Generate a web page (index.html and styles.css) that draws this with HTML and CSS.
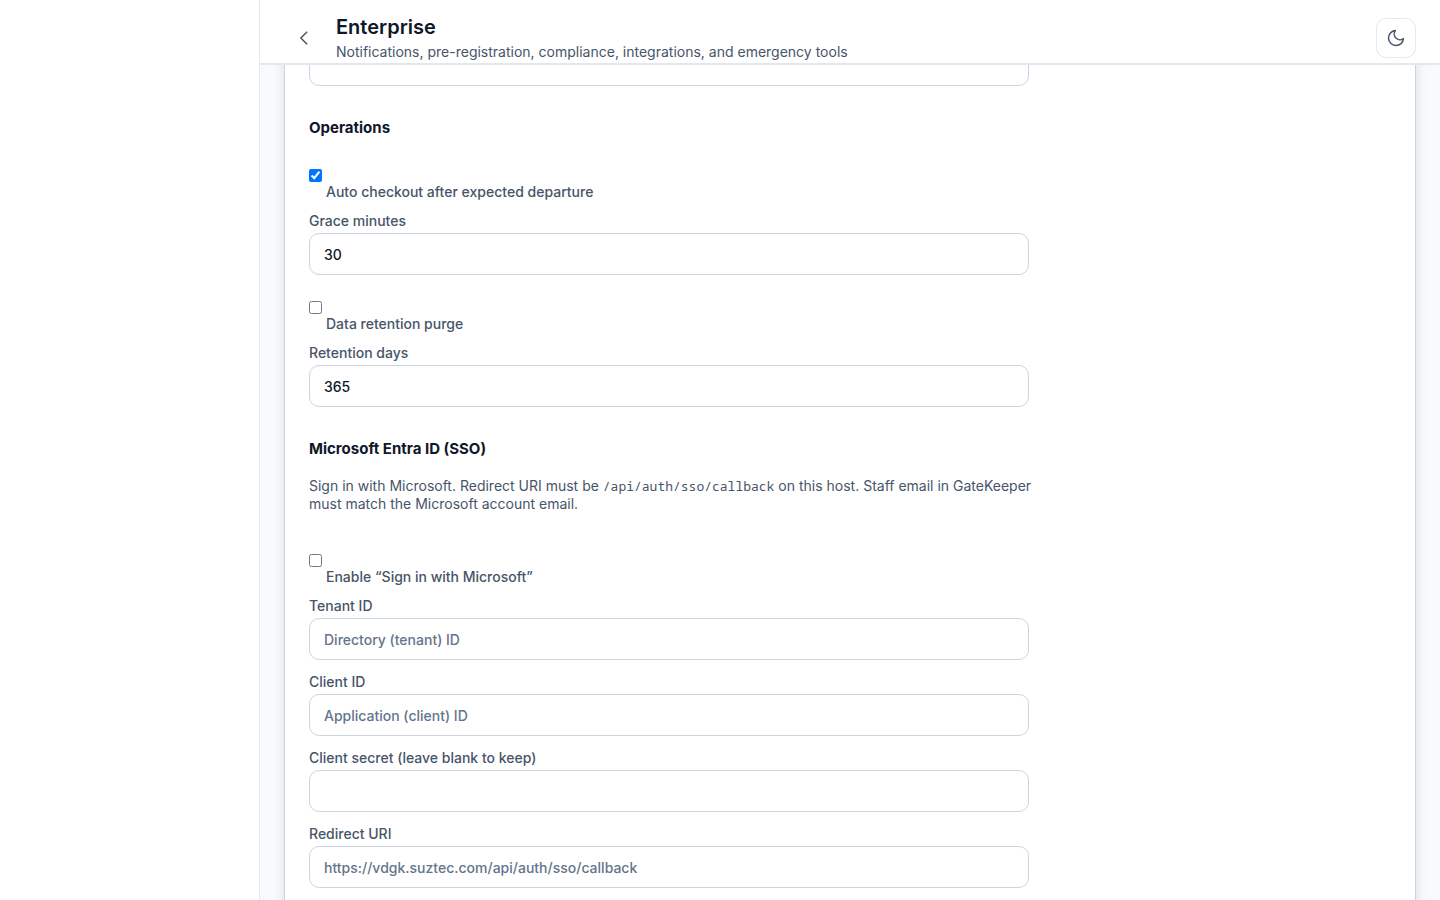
FILE: index.html
```html
<!DOCTYPE html>
<html lang="en">
<head>
<meta charset="utf-8">
<meta name="viewport" content="width=device-width, initial-scale=1">
<title>Enterprise</title>
<link rel="stylesheet" href="styles.css">
</head>
<body>
<div class="app">
  <aside class="sidebar"></aside>
  <div class="content">
    <header class="topbar">
      <button class="back" type="button" aria-label="Back">
        <svg width="20" height="20" viewBox="0 0 24 24" fill="none" stroke="currentColor" stroke-width="1.8"><path d="M15.75 19.5L8.25 12l7.5-7.5"/></svg>
      </button>
      <div class="titles">
        <h1 class="title">Enterprise</h1>
        <p class="subtitle">Notifications, pre-registration, compliance, integrations, and emergency tools</p>
      </div>
      <button class="theme" type="button" aria-label="Toggle theme">
        <svg width="20" height="20" viewBox="0 0 24 24" fill="none" stroke="currentColor" stroke-width="1.8" stroke-linejoin="round"><path d="M21 12.79A9 9 0 1 1 11.21 3 7 7 0 0 0 21 12.79z"/></svg>
      </button>
    </header>
    <main class="main">
      <div class="card">
        <form class="form">
          <input class="input" type="text" aria-label="Previous setting">

          <h2 class="heading">Operations</h2>
          <label class="check"><input type="checkbox" checked><span class="check-text">Auto checkout after expected departure</span></label>
          <div class="field">
            <label class="label" for="grace">Grace minutes</label>
            <input class="input" id="grace" type="text" value="30">
          </div>
          <label class="check"><input type="checkbox"><span class="check-text">Data retention purge</span></label>
          <div class="field">
            <label class="label" for="days">Retention days</label>
            <input class="input" id="days" type="text" value="365">
          </div>

          <h2 class="heading">Microsoft Entra ID (SSO)</h2>
          <p class="hint">Sign in with Microsoft. Redirect URI must be <code class="code">/api/auth/sso/callback</code> on this host. Staff email in GateKeeper must match the Microsoft account email.</p>
          <label class="check"><input type="checkbox"><span class="check-text">Enable “Sign in with Microsoft”</span></label>
          <div class="field">
            <label class="label" for="tenant">Tenant ID</label>
            <input class="input" id="tenant" type="text" placeholder="Directory (tenant) ID">
          </div>
          <div class="field">
            <label class="label" for="client">Client ID</label>
            <input class="input" id="client" type="text" placeholder="Application (client) ID">
          </div>
          <div class="field">
            <label class="label" for="secret">Client secret (leave blank to keep)</label>
            <input class="input" id="secret" type="password">
          </div>
          <div class="field">
            <label class="label" for="redirect">Redirect URI</label>
            <input class="input" id="redirect" type="text" placeholder="https://vdgk.suztec.com/api/auth/sso/callback">
          </div>
        </form>
      </div>
    </main>
  </div>
</div>
</body>
</html>
```
FILE: styles.css
```css
* { box-sizing: border-box; }

body {
  margin: 0;
  font-family: Inter, "Liberation Sans", sans-serif;
  font-size: 14px;
  line-height: 18px;
  color: #0f172a;
  background: #f8fafc;
}

.app { display: flex; height: 100vh; overflow: hidden; }

.sidebar {
  flex: 0 0 260px;
  background: #fff;
  border-right: 1px solid #e2e8f0;
}

.content { flex: 1; min-width: 0; display: flex; flex-direction: column; }

.topbar {
  position: relative;
  z-index: 1;
  display: flex;
  align-items: center;
  gap: 12px;
  padding: 13px 24px 0;
  height: 65px;
  flex: none;
  background: #fff;
  border-bottom: 2px solid #e2e8f0;
}

.back, .theme {
  display: flex;
  align-items: center;
  justify-content: center;
  flex: none;
  width: 40px;
  height: 40px;
  padding: 0;
  color: #475569;
  background: none;
  border: 0;
}

.theme {
  margin-left: auto;
  background: #fff;
  border: 1px solid #e2e8f0;
  border-radius: 10px;
}

.title { margin: 0 0 4px; font-size: 20px; line-height: 24px; font-weight: 600; }
.subtitle { margin: 0; color: #475569; }

.main { flex: 1; min-height: 0; padding: 0 24px; overflow: hidden; }

.card {
  margin-top: -46px;
  padding: 24px;
  background: #fff;
  border: 1px solid #cbd5e1;
  border-radius: 12px;
  box-shadow: 0 4px 12px rgba(15, 23, 42, 0.12);
}

.form { max-width: 720px; }

.heading { margin: 33px 0 32px; font-size: 15px; line-height: 18px; font-weight: 700; }

.check { display: flex; align-items: flex-start; gap: 4px; color: #475569; font-weight: 500; }
.check input { width: 13px; height: 13px; margin: 0; }
.check-text { padding-top: 14px; }
.check + .field { margin-top: 11px; }
.field + .check { margin-top: 26px; }
.field + .field { margin-top: 13px; }

.label { display: block; margin-bottom: 3px; color: #475569; font-weight: 500; }

.input {
  display: block;
  width: 100%;
  height: 42px;
  padding: 0 14px;
  font: inherit;
  font-weight: 500;
  color: #0f172a;
  background: #fff;
  border: 1px solid #cbd5e1;
  border-radius: 10px;
}
.input::placeholder { color: #64748b; opacity: 1; }

.hint { margin: -13px -4px 41px 0; color: #475569; }
.code { font-family: "Noto Sans Mono", "DejaVu Sans Mono", monospace; font-size: 13px; line-height: 1; }
```
